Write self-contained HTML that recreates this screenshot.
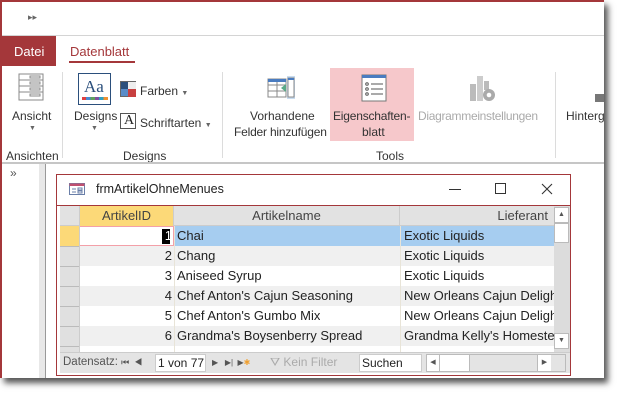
<!DOCTYPE html>
<html><head><meta charset="utf-8"><style>
*{margin:0;padding:0;box-sizing:border-box}
body{width:621px;height:400px;background:#fff;position:relative;overflow:hidden;font-family:"Liberation Sans",sans-serif;font-size:12px;color:#333}
.shot{position:absolute;left:0;top:0;width:604px;height:378px;background:#fff;box-shadow:4px 5px 6px #555;overflow:hidden;border-left:2px solid #a4373a;border-top:2px solid #a4373a}
.a{position:absolute}
.t{position:absolute;white-space:nowrap}
.cell{position:absolute;top:0;height:20px;line-height:19px;font-size:13px;color:#222;white-space:nowrap;overflow:hidden}
</style></head><body>
<div class="shot">
 <div class="t" style="left:26px;top:10px;font-size:9px;color:#666">▸▸</div>
 <div class="a" style="left:0;top:33px;width:604px;height:1px;background:#d4d4d4"></div>
 <div class="a" style="left:0;top:34px;width:54px;height:30px;background:#a4373a"></div>
 <div class="t" style="left:12px;top:42px;color:#fff;font-size:13px">Datei</div>
 <div class="t" style="left:68px;top:42px;color:#a4373a;font-size:13px">Datenblatt</div>
 <div class="a" style="left:67px;top:59px;width:66px;height:2px;background:#a4373a"></div>
 <svg class="a" style="left:16px;top:71px" width="28" height="30"><g fill="none" stroke="#888"><rect x="1" y="1" width="24" height="26"/><line x1="1" y1="7" x2="25" y2="7"/><line x1="1" y1="13" x2="25" y2="13"/><line x1="1" y1="19" x2="25" y2="19"/><rect x="12" y="3" width="10" height="2"/><rect x="12" y="9" width="10" height="2"/><rect x="12" y="15" width="10" height="2"/><rect x="12" y="21" width="10" height="2"/></g></svg>
 <div class="t" style="left:10px;top:107px;font-size:12px">Ansicht</div>
 <div class="t" style="left:27px;top:123px;font-size:7px;color:#666">▼</div>
 <div class="t" style="left:4px;top:147px;font-size:12px">Ansichten</div>
 <div class="a" style="left:60px;top:70px;width:1px;height:86px;background:#dcdcdc"></div>
 <div class="a" style="left:76px;top:71px;width:33px;height:32px;border:1px solid #2b4f7c;background:#fff"></div>
 <div class="t" style="left:82px;top:75px;font-family:'Liberation Serif',serif;font-size:17px;color:#2b4f7c">Aa</div>
 <div class="a" style="left:80px;top:95px;width:26px;height:3px;background:linear-gradient(90deg,#e04040 0 16%,#4a8ad0 16% 33%,#60a060 33% 50%,#8050a0 50% 66%,#30a0c0 66% 83%,#f09030 83%)"></div>
 <div class="t" style="left:72px;top:107px;font-size:12px">Designs</div>
 <div class="t" style="left:89px;top:123px;font-size:7px;color:#666">▼</div>
 <div class="a" style="left:118px;top:79px;width:16px;height:16px;background:linear-gradient(#2b4f7c 0 50%,#5a8cc8 50%);border:1px solid #666"></div>
 <div class="a" style="left:126px;top:80px;width:8px;height:7px;background:#eee"></div>
 <div class="a" style="left:126px;top:87px;width:8px;height:8px;background:#c84040"></div>
 <div class="t" style="left:138px;top:82px;font-size:12px">Farben <span style="font-size:7px;color:#666">▼</span></div>
 <div class="a" style="left:118px;top:111px;width:16px;height:16px;border:1px solid #555"></div>
 <div class="t" style="left:122px;top:111px;font-family:'Liberation Serif',serif;font-size:14px;color:#222">A</div>
 <div class="t" style="left:138px;top:114px;font-size:12px">Schriftarten <span style="font-size:7px;color:#666">▼</span></div>
 <div class="t" style="left:121px;top:147px;font-size:12px">Designs</div>
 <div class="a" style="left:220px;top:70px;width:1px;height:86px;background:#dcdcdc"></div>
 <svg class="a" style="left:265px;top:73px" width="30" height="26"><g fill="none" stroke="#888"><rect x="1" y="4" width="18" height="18"/><line x1="1" y1="10" x2="19" y2="10"/><line x1="1" y1="16" x2="19" y2="16"/><line x1="10" y1="4" x2="10" y2="22"/></g><rect x="1" y="4" width="18" height="3" fill="#4a7cc0"/><rect x="20" y="1" width="8" height="23" fill="#c8dcf0"/><rect x="21" y="3" width="6" height="19" fill="#fff" stroke="#888"/><rect x="21" y="3" width="6" height="2" fill="#4a7cc0"/><path d="M14 13 l5 -4 v8z" fill="#5aaa88"/></svg>
 <div class="t" style="left:248px;top:107px;font-size:12px">Vorhandene</div>
 <div class="t" style="left:232px;top:123px;font-size:12px;letter-spacing:-0.2px">Felder hinzufügen</div>
 <div class="a" style="left:328px;top:66px;width:84px;height:73px;background:#f6c8cb"></div>
 <svg class="a" style="left:359px;top:72px" width="26" height="28"><rect x="1" y="1" width="24" height="26" fill="#fff" stroke="#777"/><rect x="1" y="1" width="24" height="3" fill="#4a7cc0"/><g stroke="#555" fill="none"><circle cx="6" cy="10" r="1.3"/><circle cx="6" cy="15" r="1.3"/><circle cx="6" cy="20" r="1.3"/><line x1="10" y1="10" x2="22" y2="10"/><line x1="10" y1="15" x2="22" y2="15"/><line x1="10" y1="20" x2="22" y2="20"/></g></svg>
 <div class="t" style="left:331px;top:107px;font-size:12px;letter-spacing:-0.2px">Eigenschaften-</div>
 <div class="t" style="left:360px;top:123px;font-size:12px">blatt</div>
 <svg class="a" style="left:466px;top:72px" width="30" height="30"><rect x="2" y="10" width="6" height="17" fill="#bbb"/><rect x="9" y="2" width="6" height="25" fill="#ccc"/><rect x="16" y="7" width="5" height="9" fill="#bbb"/><circle cx="21" cy="21" r="6" fill="#aaa"/><circle cx="21" cy="21" r="2.3" fill="#fff"/></svg>
 <div class="t" style="left:416px;top:107px;font-size:12px;color:#aaa;letter-spacing:-0.3px">Diagrammeinstellungen</div>
 <div class="t" style="left:374px;top:147px;font-size:12px">Tools</div>
 <div class="a" style="left:553px;top:70px;width:1px;height:86px;background:#dcdcdc"></div>
 <div class="a" style="left:593px;top:92px;width:12px;height:8px;background:#777"></div>
 <div class="t" style="left:564px;top:107px;font-size:12px">Hintergr</div>
 <div class="a" style="left:0;top:160px;width:604px;height:2px;background:#c6c6c6"></div>
 <div class="t" style="left:8px;top:164px;font-size:12px;color:#555">»</div>
 <div class="a" style="left:37px;top:162px;width:6px;height:220px;background:#e8e8e8"></div>
 <div class="a" style="left:43px;top:162px;width:1px;height:220px;background:#999"></div>
 <div class="a" style="left:54px;top:172px;width:515px;height:202px;border:1px solid #a4373a;background:#fff">
  <svg class="a" style="left:12px;top:8px" width="16" height="12"><rect x="0.5" y="0.5" width="15" height="11" fill="#fff" stroke="#6a7fa8"/><rect x="0.5" y="0.5" width="15" height="2.5" fill="#c05070"/><g stroke="#6a7fa8"><line x1="3" y1="6" x2="7" y2="6"/><line x1="3" y1="9" x2="7" y2="9"/><rect x="9" y="5" width="4" height="2" fill="none"/><rect x="9" y="8" width="4" height="2" fill="none"/></g></svg>
  <div class="t" style="left:39px;top:7px;font-size:12.5px;color:#222">frmArtikelOhneMenues</div>
  <div class="a" style="left:392px;top:14px;width:12px;height:1px;background:#333"></div>
  <div class="a" style="left:438px;top:8px;width:11px;height:11px;border:1px solid #333"></div>
  <svg class="a" style="left:484px;top:8px" width="12" height="12"><path d="M1 1L11 11M11 1L1 11" stroke="#333" stroke-width="1.1"/></svg>
  <div class="a" style="left:0;top:30px;width:513px;height:1px;background:#a4373a"></div>
  <div class="a" style="left:3px;top:31px;width:510px;height:146px;background:#fff;overflow:hidden">
   <div class="a" style="left:0;top:0;width:19px;height:146px;background:#e0e0e0"></div>
   <div class="a" style="left:0;top:0;width:494px;height:20px;background:#e2e2e2;border-bottom:1px solid #ccc"></div>
   <div class="a" style="left:19px;top:0;width:95px;height:20px;background:#fcd978;border-right:1px solid #ccc"></div>
   <div class="cell" style="left:19px;width:95px;text-align:center;color:#444">ArtikelID</div>
   <div class="cell" style="left:114px;width:226px;text-align:center;color:#444;border-right:1px solid #ccc">Artikelname</div>
   <div class="cell" style="left:340px;width:154px;text-align:right;color:#444;padding-right:6px">Lieferant</div>
   <div class="a" style="left:0;top:20px;width:19px;height:20px;background:#fcd978"></div>
   <div class="a" style="left:19px;top:20px;width:475px;height:20px;background:#a6cdf0"></div>
   <div class="a" style="left:19px;top:20px;width:95px;height:20px;background:#fff;border:1px solid #f3a0a8"></div>
   <div class="a" style="left:102px;top:23px;width:8px;height:15px;background:#000"></div>
   <div class="cell" style="left:19px;top:20px;width:93px;text-align:right;color:#fff">1</div>
   <div class="cell" style="left:117px;top:20px">Chai</div><div class="cell" style="left:344px;top:20px">Exotic Liquids</div>
   <div class="a" style="left:19px;top:40px;width:475px;height:20px;background:#f0f0f0"></div>
   <div class="cell" style="left:19px;top:40px;width:93px;text-align:right">2</div><div class="cell" style="left:117px;top:40px">Chang</div><div class="cell" style="left:344px;top:40px">Exotic Liquids</div>
   <div class="cell" style="left:19px;top:60px;width:93px;text-align:right">3</div><div class="cell" style="left:117px;top:60px">Aniseed Syrup</div><div class="cell" style="left:344px;top:60px">Exotic Liquids</div>
   <div class="a" style="left:19px;top:80px;width:475px;height:20px;background:#f0f0f0"></div>
   <div class="cell" style="left:19px;top:80px;width:93px;text-align:right">4</div><div class="cell" style="left:117px;top:80px">Chef Anton's Cajun Seasoning</div><div class="cell" style="left:344px;top:80px;width:150px">New Orleans Cajun Delights</div>
   <div class="cell" style="left:19px;top:100px;width:93px;text-align:right">5</div><div class="cell" style="left:117px;top:100px">Chef Anton's Gumbo Mix</div><div class="cell" style="left:344px;top:100px;width:150px">New Orleans Cajun Delights</div>
   <div class="a" style="left:19px;top:120px;width:475px;height:20px;background:#f0f0f0"></div>
   <div class="cell" style="left:19px;top:120px;width:93px;text-align:right">6</div><div class="cell" style="left:117px;top:120px">Grandma's Boysenberry Spread</div><div class="cell" style="left:344px;top:120px;width:150px">Grandma Kelly's Homestead</div>
   <div class="a" style="left:19px;top:0;width:1px;height:146px;background:#ccc"></div>
   <div class="a" style="left:114px;top:20px;width:1px;height:126px;background:#e8e4d8"></div>
   <div class="a" style="left:340px;top:20px;width:1px;height:126px;background:#e8e4d8"></div>
   <div class="a" style="left:0;top:40px;width:19px;height:1px;background:#bbb;box-shadow:0 20px #bbb,0 40px #bbb,0 60px #bbb,0 80px #bbb,0 100px #bbb"></div>
   <div class="a" style="left:494px;top:0;width:16px;height:146px;background:#dcdcdc"></div>
   <div class="a" style="left:494px;top:1px;width:15px;height:16px;background:#fff;border:1px solid #bbb;font-size:7px;text-align:center;line-height:14px;color:#555">▲</div>
   <div class="a" style="left:494px;top:17px;width:15px;height:20px;background:#fff;border:1px solid #bbb"></div>
   <div class="a" style="left:494px;top:127px;width:15px;height:16px;background:#fff;border:1px solid #bbb;font-size:7px;text-align:center;line-height:14px;color:#555">▼</div>
  </div>
  <div class="a" style="left:3px;top:177px;width:510px;height:21px;background:#e4e4e4;border-top:1px solid #ccc"></div>
  <div class="t" style="left:6px;top:181px;font-size:11.5px;color:#555">Datensatz: <span style="font-size:9px">⏮ &nbsp;◀</span></div>
  <div class="a" style="left:98px;top:179px;width:51px;height:18px;background:#fff;border:1px solid #ccc;font-size:12px;line-height:16px;padding-left:2px;color:#222">1 von 77</div>
  <div class="t" style="left:155px;top:183px;font-size:8px;color:#555">▶ &nbsp; ▶| &nbsp;▶<span style="color:#f0a030">✱</span></div>
  <div class="t" style="left:213px;top:180px;font-size:12px;color:#aaa">⛛ Kein Filter</div>
  <div class="a" style="left:302px;top:179px;width:63px;height:18px;background:#fff;border:1px solid #ccc;font-size:12px;line-height:16px;padding-left:2px;color:#222">Suchen</div>
  <div class="a" style="left:369px;top:179px;width:140px;height:18px;background:#e4e4e4;border:1px solid #bbb"></div>
  <div class="a" style="left:370px;top:180px;width:13px;height:16px;background:#fff;border-right:1px solid #bbb;font-size:7px;text-align:center;line-height:16px;color:#555">◀</div>
  <div class="a" style="left:383px;top:180px;width:30px;height:16px;background:#fff;border-right:1px solid #bbb"></div>
  <div class="a" style="left:480px;top:180px;width:14px;height:16px;background:#fff;border-left:1px solid #bbb;font-size:7px;text-align:center;line-height:16px;color:#555">▶</div>
 </div>
</div>
</body></html>
